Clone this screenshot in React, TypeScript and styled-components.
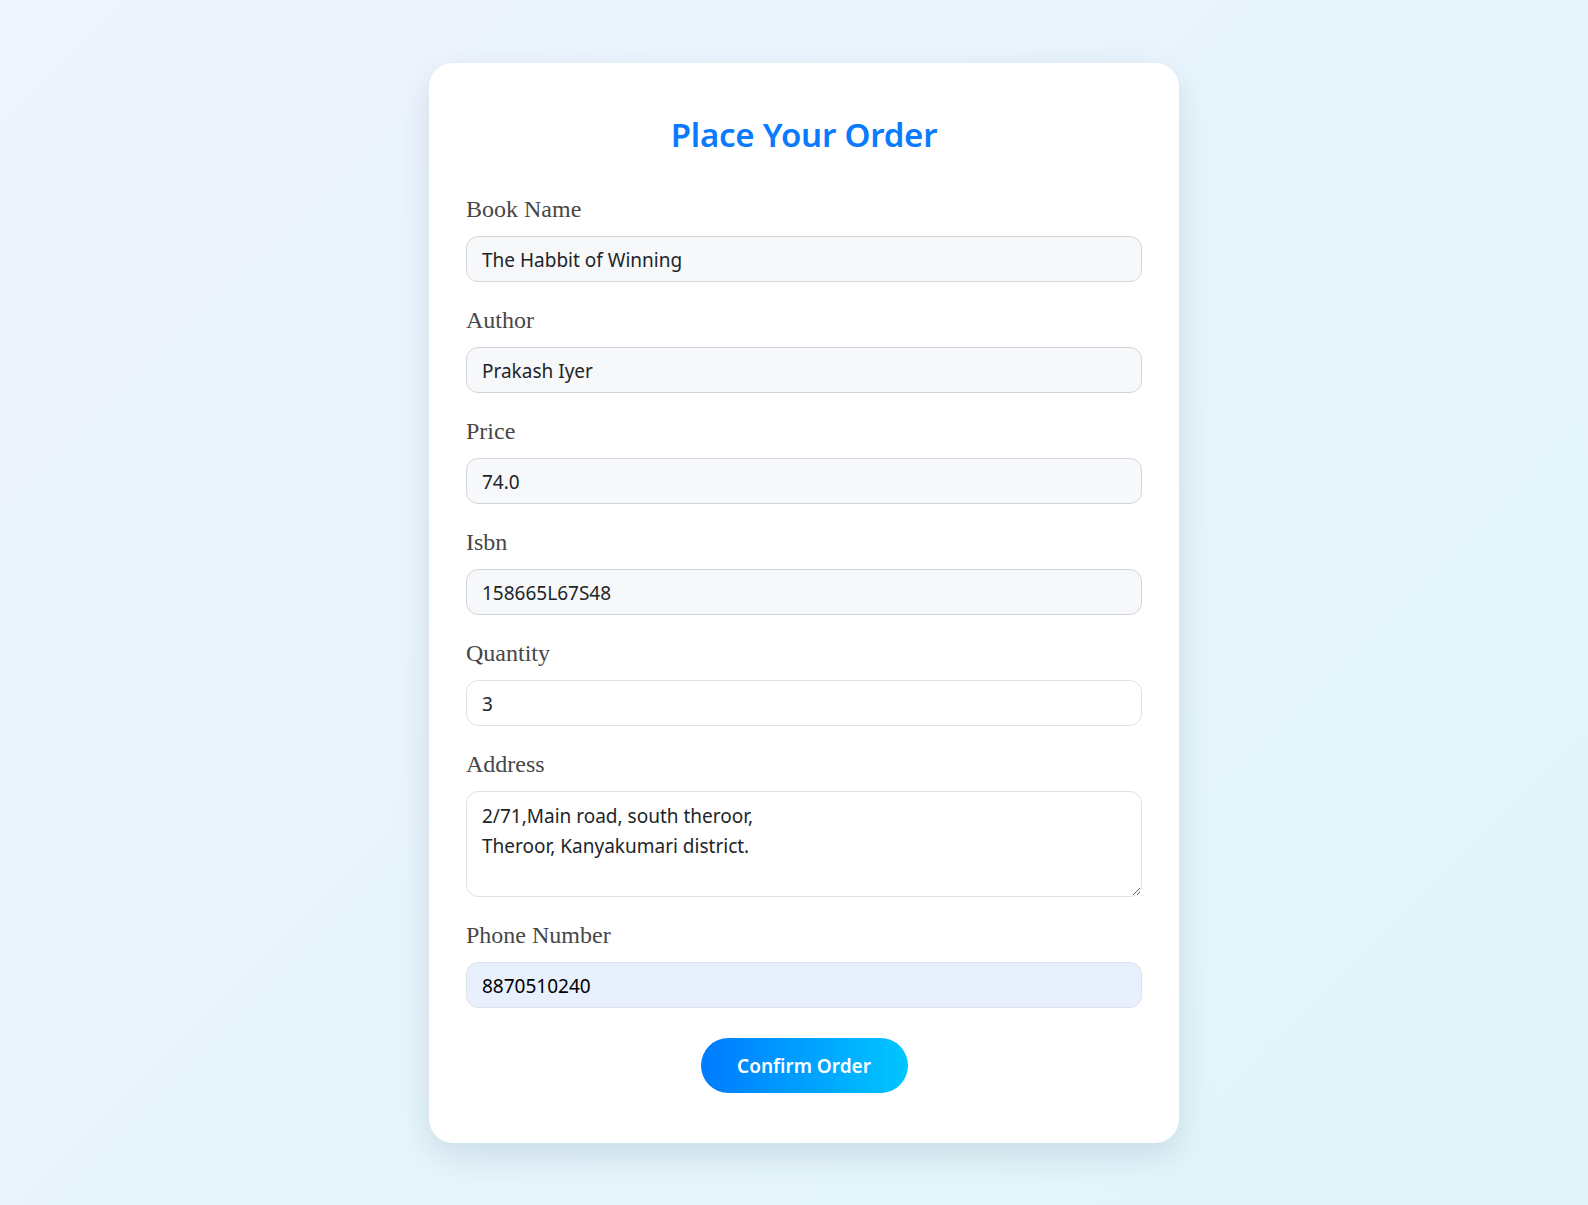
import React from "react";
import styled, { createGlobalStyle } from "styled-components";

const GlobalStyle = createGlobalStyle`
  html, body {
    margin: 0;
    padding: 0;
  }
  body {
    background: linear-gradient(135deg, #eff4fe 0%, #e0f4fa 100%);
    min-height: 1205px;
    font-family: "Noto Sans", "Open Sans", sans-serif;
  }
`;

const Page = styled.div`
  min-height: 1205px;
  display: flex;
  justify-content: center;
  align-items: flex-start;
  padding: 63px 0 0 20px;
  box-sizing: border-box;
`;

const Card = styled.form`
  width: 750px;
  box-sizing: border-box;
  background: #ffffff;
  border-radius: 24px;
  padding: 49px 37px 50px;
  box-shadow: 0 12px 32px rgba(60, 100, 120, 0.16);
  display: flex;
  flex-direction: column;
`;

const Title = styled.h2`
  margin: 0 0 37px;
  text-align: center;
  font-family: "Noto Sans", sans-serif;
  font-weight: 600;
  font-size: 33px;
  letter-spacing: -0.2px;
  line-height: 46px;
  color: #0a7bff;
`;

const Field = styled.div`
  display: flex;
  flex-direction: column;
  margin-bottom: 24px;
`;

const Label = styled.label`
  font-family: "Liberation Serif", "Times New Roman", serif;
  font-size: 24px;
  line-height: 28px;
  color: #474747;
  margin-bottom: 13px;
`;

const Input = styled.input<{ $tone?: "readonly" | "plain" | "filled" }>`
  height: 46px;
  box-sizing: border-box;
  border-radius: 12px;
  padding: 2px 15px 0;
  font-family: "Noto Sans", sans-serif;
  font-size: 19px;
  outline: none;
  width: 100%;
  border: 1px solid
    ${(p) => (p.$tone === "plain" ? "#dee1e6" : p.$tone === "filled" ? "#dde3ec" : "#d1d5db")};
  background: ${(p) =>
    p.$tone === "plain" ? "#ffffff" : p.$tone === "filled" ? "#e8f0fd" : "#f6f8fa"};
  color: ${(p) => (p.$tone === "filled" ? "#000000" : "#212529")};
`;

const TextArea = styled.textarea`
  height: 106px;
  box-sizing: border-box;
  border-radius: 12px;
  border: 1px solid #dee1e6;
  padding: 9px 15px 8px;
  font-family: "Noto Sans", sans-serif;
  font-size: 19px;
  line-height: 30px;
  color: #212529;
  background: #ffffff;
  outline: none;
  resize: vertical;
  width: 100%;
`;

const ButtonRow = styled.div`
  display: flex;
  justify-content: center;
  margin-top: 6px;
`;

const Button = styled.button`
  width: 207px;
  height: 55px;
  border: none;
  border-radius: 28px;
  background: linear-gradient(90deg, #007bff 0%, #00c6ff 100%);
  color: #ffffff;
  font-family: "Noto Sans", sans-serif;
  font-weight: 600;
  font-size: 19px;
  cursor: pointer;
`;

type FieldDef = {
  label: string;
  value: string;
  tone: "readonly" | "plain" | "filled";
};

const fields: FieldDef[] = [
  { label: "Book Name", value: "The Habbit of Winning", tone: "readonly" },
  { label: "Author", value: "Prakash Iyer", tone: "readonly" },
  { label: "Price", value: "74.0", tone: "readonly" },
  { label: "Isbn", value: "158665L67S48", tone: "readonly" },
  { label: "Quantity", value: "3", tone: "plain" },
];

export default function App() {
  return (
    <>
      <GlobalStyle />
      <Page>
        <Card onSubmit={(e) => e.preventDefault()}>
          <Title>Place Your Order</Title>
          {fields.map((f) => (
            <Field key={f.label}>
              <Label>{f.label}</Label>
              <Input
                $tone={f.tone}
                defaultValue={f.value}
                readOnly={f.tone === "readonly"}
                spellCheck={false}
              />
            </Field>
          ))}
          <Field>
            <Label>Address</Label>
            <TextArea
              defaultValue={"2/71,Main road, south theroor,\nTheroor, Kanyakumari district."}
            />
          </Field>
          <Field>
            <Label>Phone Number</Label>
            <Input $tone="filled" defaultValue="8870510240" spellCheck={false} />
          </Field>
          <ButtonRow>
            <Button type="submit">Confirm Order</Button>
          </ButtonRow>
        </Card>
      </Page>
    </>
  );
}
